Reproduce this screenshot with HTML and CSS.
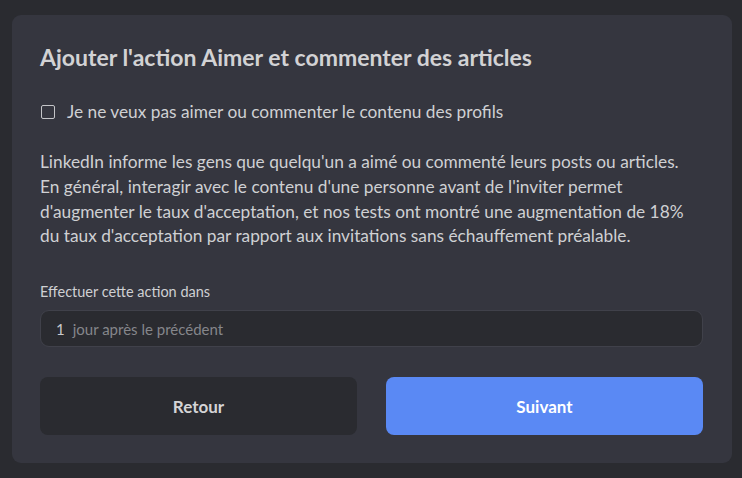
FILE: index.html
```html
<!DOCTYPE html>
<html lang="fr">
<head>
<meta charset="utf-8">
<title>Aimer et commenter</title>
<link rel="stylesheet" href="styles.css">
</head>
<body>
<main class="card">
  <h1 class="title">Ajouter l'action Aimer et commenter des articles</h1>
  <label class="check">
    <span class="box"></span>
    <span>Je ne veux pas aimer ou commenter le contenu des profils</span>
  </label>
  <p class="desc">LinkedIn informe les gens que quelqu'un a aimé ou commenté leurs posts ou articles. En général, interagir avec le contenu d'une personne avant de l'inviter permet d'augmenter le taux d'acceptation, et nos tests ont montré une augmentation de 18% du taux d'acceptation par rapport aux invitations sans échauffement préalable.</p>
  <div class="field-label">Effectuer cette action dans</div>
  <div class="field">
    <span class="num">1</span>
    <span class="unit">jour après le précédent</span>
  </div>
  <div class="actions">
    <button class="btn btn-back">Retour</button>
    <button class="btn btn-next">Suivant</button>
  </div>
</main>
</body>
</html>
```
FILE: styles.css
```css
* { box-sizing: border-box; }
html, body { margin: 0; height: 100%; }
body {
  background: #2a2b30;
  font-family: Lato, "Open Sans", sans-serif;
  padding: 15px 10px 15px 12px;
}
.card {
  background: #35363f;
  border-radius: 9px;
  padding: 28px 29px 28px 28px;
  width: 720px;
  height: 448px;
}
.title {
  margin: 0;
  font-size: 23px;
  font-weight: 700;
  color: #d2d2d4;
  line-height: 28px;
}
.check {
  display: flex;
  align-items: center;
  gap: 12px;
  margin-top: 31px;
  font-size: 17.3px;
  color: #cfd0d3;
  line-height: 20px;
}
.box {
  width: 14px;
  height: 14px;
  border: 1.5px solid #c4c5c8;
  border-radius: 2px;
  flex: none;
  margin-left: 1px;
}
.desc {
  margin: 28px 0 0;
  max-width: 650px;
  font-size: 17.3px;
  line-height: 24.8px;
  color: #cfd0d3;
}
.field-label {
  margin-top: 34px;
  font-size: 14.5px;
  color: #cfd0d3;
  line-height: 18px;
}
.field {
  margin-top: 9px;
  height: 37px;
  background: #2a2b30;
  border: 1px solid #40414a;
  border-radius: 9px;
  display: flex;
  align-items: center;
  padding-left: 15px;
  gap: 8px;
  font-size: 15px;
}
.num { color: #c8c9cc; }
.unit { color: #85868b; }
.actions {
  margin-top: 30px;
  display: grid;
  grid-template-columns: 1fr 1fr;
  gap: 29px;
}
.btn {
  height: 58px;
  border: 0;
  border-radius: 8px;
  font-family: inherit;
  font-size: 17px;
  font-weight: 700;
}
.btn-back { background: #2a2b30; color: #d4d4d6; }
.btn-next { background: #5a89f4; color: #ffffff; }
```
